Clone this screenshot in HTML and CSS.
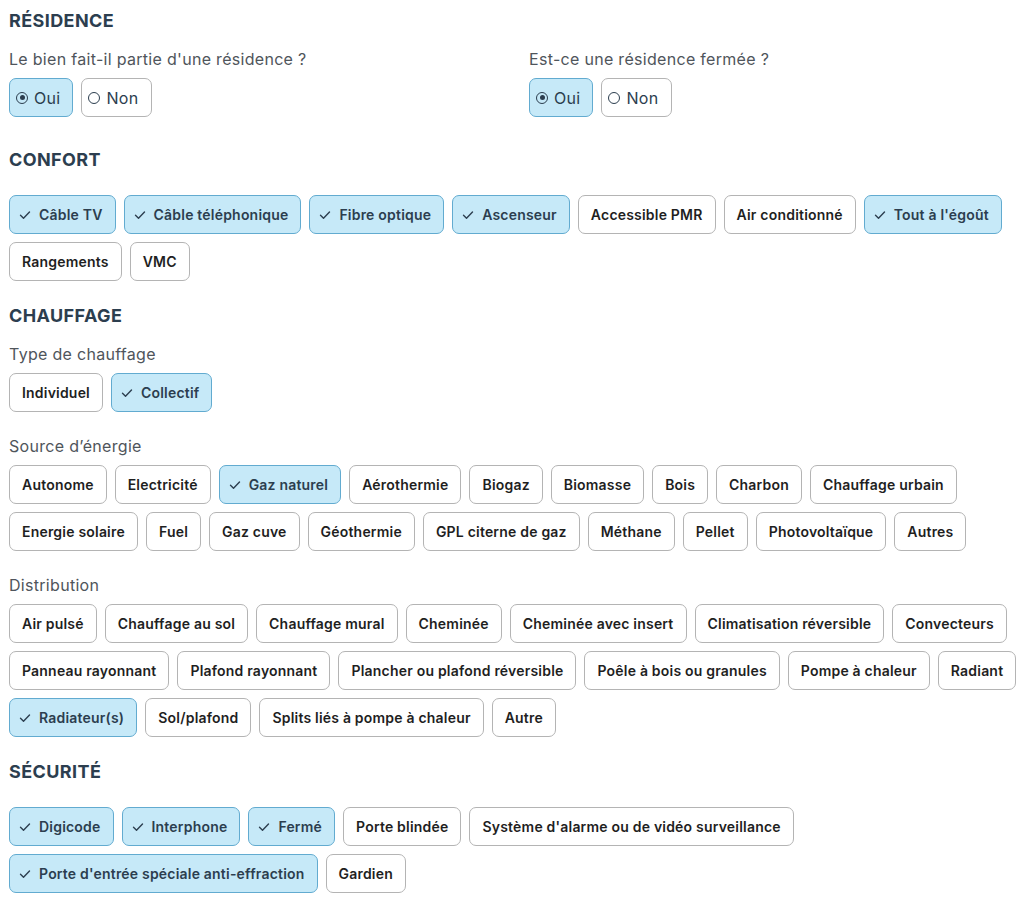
FILE: index.html
```html
<!DOCTYPE html>
<html lang="fr">
<head>
<meta charset="utf-8">
<title>Caractéristiques</title>
<link rel="stylesheet" href="styles.css">
</head>
<body>
<main class="page">

  <section class="section section-residence">
    <h2 class="section-title">RÉSIDENCE</h2>
    <div class="two-col">
      <div class="field">
        <p class="field-label">Le bien fait-il partie d'une résidence ?</p>
        <div class="chips">
          <span class="chip radio is-selected"><span class="radio-dot"></span>Oui</span>
          <span class="chip radio"><span class="radio-dot"></span>Non</span>
        </div>
      </div>
      <div class="field">
        <p class="field-label">Est-ce une résidence fermée ?</p>
        <div class="chips">
          <span class="chip radio is-selected"><span class="radio-dot"></span>Oui</span>
          <span class="chip radio"><span class="radio-dot"></span>Non</span>
        </div>
      </div>
    </div>
  </section>

  <section class="section">
    <h2 class="section-title">CONFORT</h2>
    <div class="chips chips-solo">
      <span class="chip is-selected"><svg class="check" viewBox="0 0 12 12"><path d="M1.5 6.2 L4.5 9.2 L10.5 3"/></svg>Câble TV</span>
      <span class="chip is-selected"><svg class="check" viewBox="0 0 12 12"><path d="M1.5 6.2 L4.5 9.2 L10.5 3"/></svg>Câble téléphonique</span>
      <span class="chip is-selected"><svg class="check" viewBox="0 0 12 12"><path d="M1.5 6.2 L4.5 9.2 L10.5 3"/></svg>Fibre optique</span>
      <span class="chip is-selected"><svg class="check" viewBox="0 0 12 12"><path d="M1.5 6.2 L4.5 9.2 L10.5 3"/></svg>Ascenseur</span>
      <span class="chip">Accessible PMR</span>
      <span class="chip">Air conditionné</span>
      <span class="chip is-selected"><svg class="check" viewBox="0 0 12 12"><path d="M1.5 6.2 L4.5 9.2 L10.5 3"/></svg>Tout à l'égoût</span>
      <span class="chip">Rangements</span>
      <span class="chip">VMC</span>
    </div>
  </section>

  <section class="section">
    <h2 class="section-title">CHAUFFAGE</h2>
    <div class="field-stack">
      <div class="field">
        <p class="field-label">Type de chauffage</p>
        <div class="chips">
          <span class="chip">Individuel</span>
          <span class="chip is-selected"><svg class="check" viewBox="0 0 12 12"><path d="M1.5 6.2 L4.5 9.2 L10.5 3"/></svg>Collectif</span>
        </div>
      </div>
      <div class="field">
        <p class="field-label">Source d’énergie</p>
        <div class="chips">
          <span class="chip">Autonome</span>
          <span class="chip">Electricité</span>
          <span class="chip is-selected"><svg class="check" viewBox="0 0 12 12"><path d="M1.5 6.2 L4.5 9.2 L10.5 3"/></svg>Gaz naturel</span>
          <span class="chip">Aérothermie</span>
          <span class="chip">Biogaz</span>
          <span class="chip">Biomasse</span>
          <span class="chip">Bois</span>
          <span class="chip">Charbon</span>
          <span class="chip">Chauffage urbain</span>
          <span class="chip">Energie solaire</span>
          <span class="chip">Fuel</span>
          <span class="chip">Gaz cuve</span>
          <span class="chip">Géothermie</span>
          <span class="chip">GPL citerne de gaz</span>
          <span class="chip">Méthane</span>
          <span class="chip">Pellet</span>
          <span class="chip">Photovoltaïque</span>
          <span class="chip">Autres</span>
        </div>
      </div>
      <div class="field">
        <p class="field-label">Distribution</p>
        <div class="chips">
          <span class="chip">Air pulsé</span>
          <span class="chip">Chauffage au sol</span>
          <span class="chip">Chauffage mural</span>
          <span class="chip">Cheminée</span>
          <span class="chip">Cheminée avec insert</span>
          <span class="chip">Climatisation réversible</span>
          <span class="chip">Convecteurs</span>
          <span class="chip">Panneau rayonnant</span>
          <span class="chip">Plafond rayonnant</span>
          <span class="chip">Plancher ou plafond réversible</span>
          <span class="chip">Poêle à bois ou granules</span>
          <span class="chip">Pompe à chaleur</span>
          <span class="chip">Radiant</span>
          <span class="chip is-selected"><svg class="check" viewBox="0 0 12 12"><path d="M1.5 6.2 L4.5 9.2 L10.5 3"/></svg>Radiateur(s)</span>
          <span class="chip">Sol/plafond</span>
          <span class="chip">Splits liés à pompe à chaleur</span>
          <span class="chip">Autre</span>
        </div>
      </div>
    </div>
  </section>

  <section class="section">
    <h2 class="section-title">SÉCURITÉ</h2>
    <div class="chips chips-solo">
      <span class="chip is-selected"><svg class="check" viewBox="0 0 12 12"><path d="M1.5 6.2 L4.5 9.2 L10.5 3"/></svg>Digicode</span>
      <span class="chip is-selected"><svg class="check" viewBox="0 0 12 12"><path d="M1.5 6.2 L4.5 9.2 L10.5 3"/></svg>Interphone</span>
      <span class="chip is-selected"><svg class="check" viewBox="0 0 12 12"><path d="M1.5 6.2 L4.5 9.2 L10.5 3"/></svg>Fermé</span>
      <span class="chip">Porte blindée</span>
      <span class="chip">Système d'alarme ou de vidéo surveillance</span>
      <span class="chip is-selected"><svg class="check" viewBox="0 0 12 12"><path d="M1.5 6.2 L4.5 9.2 L10.5 3"/></svg>Porte d'entrée spéciale anti-effraction</span>
      <span class="chip">Gardien</span>
    </div>
  </section>

</main>
</body>
</html>
```

FILE: styles.css
```css
* {
  box-sizing: border-box;
}

html, body {
  margin: 0;
  padding: 0;
  background: #ffffff;
}

body {
  font-family: "Inter", "Noto Sans", "DejaVu Sans", sans-serif;
  color: #2b2b2b;
}

.page {
  padding: 10px 0 0 9px;
  display: flex;
  flex-direction: column;
  gap: 24px;
}

.section {
  display: flex;
  flex-direction: column;
}

.section-residence {
  padding-bottom: 8px;
}

.section-title {
  margin: 0 0 17px 0;
  font-size: 18px;
  line-height: 22px;
  font-weight: 700;
  letter-spacing: 0.4px;
  color: #2c3e4f;
}

.two-col {
  display: grid;
  grid-template-columns: 1fr 1fr;
  column-gap: 25px;
}

.field-stack {
  display: flex;
  flex-direction: column;
  gap: 24px;
}

.field {
  display: flex;
  flex-direction: column;
}

.field-label {
  margin: 0 0 9px 0;
  font-size: 16px;
  line-height: 20px;
  font-weight: 400;
  letter-spacing: 0.3px;
  color: #4f555b;
}

.chips {
  display: flex;
  flex-wrap: wrap;
  gap: 8px;
}

.chips-solo {
  margin-top: 7px;
}

.chip {
  display: inline-flex;
  align-items: center;
  height: 39px;
  padding: 0 12px;
  border: 1px solid #b4b4b4;
  border-radius: 7px;
  background: #ffffff;
  font-size: 14px;
  font-weight: 600;
  letter-spacing: 0.2px;
  color: #1f1f1f;
  white-space: nowrap;
}

.chip.is-selected {
  background: #c6e9f8;
  border-color: #62abd0;
  color: #2c3e4f;
  padding-left: 9px;
}

.check {
  width: 12px;
  height: 12px;
  margin-right: 8px;
  fill: none;
  stroke: #2c3e4f;
  stroke-width: 1.4;
  stroke-linecap: round;
  stroke-linejoin: round;
}

.chip.radio {
  padding: 0 12px 0 6px;
  font-weight: 400;
  font-size: 16px;
  letter-spacing: 0.3px;
  color: #2c3e4f;
}

.chip.radio.is-selected {
  padding-left: 6px;
}

.radio-dot {
  width: 12px;
  height: 12px;
  margin-right: 6px;
  border: 1.6px solid #2c3e4f;
  border-radius: 50%;
  display: inline-flex;
  align-items: center;
  justify-content: center;
}

.chip.radio.is-selected .radio-dot::after {
  content: "";
  width: 5px;
  height: 5px;
  border-radius: 50%;
  background: #2c3e4f;
}
```
